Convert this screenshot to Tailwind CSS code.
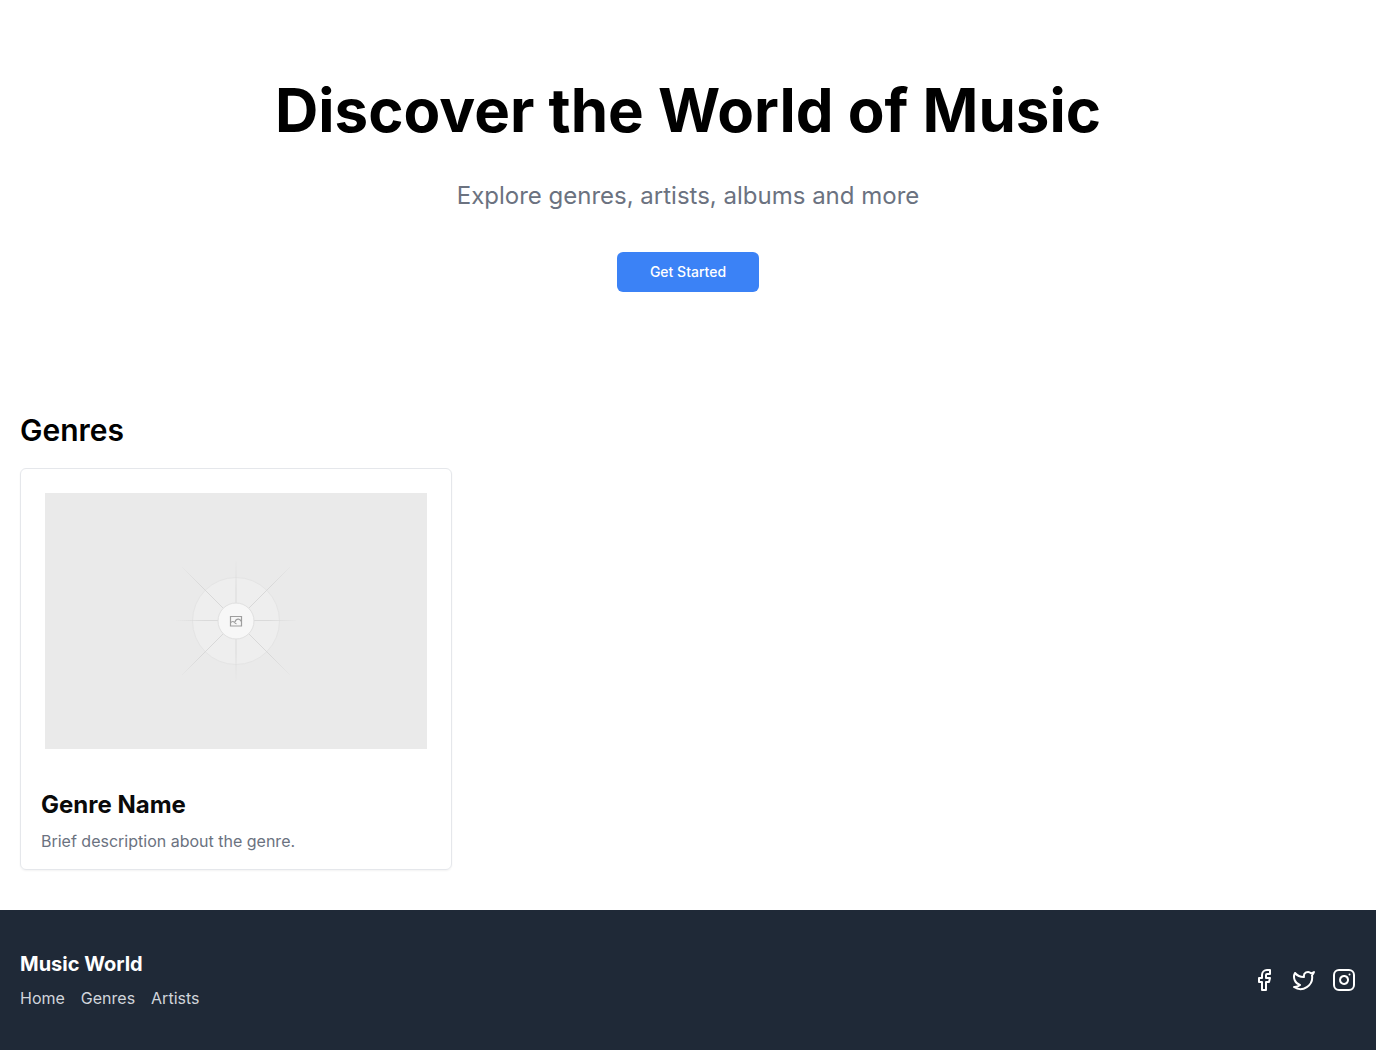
<!DOCTYPE html>
<html lang="en">
<head>
<meta charset="utf-8">
<title>Music World</title>
<script src="https://cdn.jsdelivr.net/npm/@tailwindcss/browser@4"></script>
</head>
<body class="flex min-h-screen flex-col bg-white font-['Inter',sans-serif] text-[#0a0a0a]">
<main class="grow">
<section class="flex flex-col items-center px-5 py-20 text-center text-black">
<h1 class="text-6xl font-bold">Discover the World of Music</h1>
<p class="mt-10 text-2xl text-[#6b7280]">Explore genres, artists, albums and more</p>
<button type="button" class="mt-10 h-10 rounded-md bg-[#3b82f6] px-[33px] text-sm font-medium text-white">Get Started</button>
</section>
<section class="px-5 py-10">
<h2 class="mb-5 text-3xl font-semibold text-black">Genres</h2>
<div class="grid grid-cols-3 gap-5">
<article class="rounded-md border border-[#e5e7eb] shadow-xs">
<div class="p-6">
<svg class="h-64 w-full bg-[#eaeaea]" viewBox="0 0 382 256" fill="none" role="img" aria-label="Genre image placeholder">
<defs>
<radialGradient id="fade" gradientUnits="userSpaceOnUse" cx="191" cy="128" r="64"><stop offset="0.5" stop-color="#dadada"/><stop offset="1" stop-color="#dadada" stop-opacity="0"/></radialGradient>
<radialGradient id="fade-diagonal" gradientUnits="userSpaceOnUse" cx="191" cy="128" r="82"><stop offset="0.6" stop-color="#d8d8d8"/><stop offset="1" stop-color="#d8d8d8" stop-opacity="0"/></radialGradient>
</defs>
<circle cx="191" cy="128" r="43.5" fill="#eeeeee" stroke="#e4e4e4"/>
<path d="M131 127.500H251M191 68V188" stroke="url(#fade)"/>
<path d="M137 74L245 182M245 74L137 182" stroke="url(#fade-diagonal)"/>
<circle cx="191" cy="128" r="18" fill="#f7f7f7" stroke="#e0e0e0"/>
<path d="M185.500 123.500h11v9.500h-11zM185.500 129.800c1.500-1.700 3-1.700 4-.3.600.8 1.200 1.200 2 1.100M190 129c.8-2.400 2.300-3 3.600-2.800 1.500.3 2.200 1.500 2.900 2.500" stroke="#9e9e9e" stroke-width="1.200"/>
</svg>
</div>
<div class="px-5 py-4">
<h3 class="text-2xl font-bold">Genre Name</h3>
<p class="mt-2 text-[#6b7280]">Brief description about the genre.</p>
</div>
</article>
</div>
</section>
</main>
<footer class="flex items-center justify-between bg-[#1f2937] px-5 py-10 text-white">
<div>
<h2 class="text-xl font-bold">Music World</h2>
<nav class="mt-2 flex gap-4 text-[#d1d5db]"><a href="#">Home</a><a href="#">Genres</a><a href="#">Artists</a></nav>
</div>
<div class="flex gap-4">
<a href="#" aria-label="Facebook"><svg class="size-6" viewBox="0 0 24 24" fill="none" stroke="currentColor" stroke-width="2" stroke-linecap="round" stroke-linejoin="round"><path d="M18 2h-3a5 5 0 0 0-5 5v3H7v4h3v8h4v-8h3l1-4h-4V7a1 1 0 0 1 1-1h3z"/></svg></a>
<a href="#" aria-label="Twitter"><svg class="size-6" viewBox="0 0 24 24" fill="none" stroke="currentColor" stroke-width="2" stroke-linecap="round" stroke-linejoin="round"><path d="M22 4s-.7 2.100-2 3.400c1.600 10-9.400 17.300-18 11.600 2.200.1 4.400-.6 6-2C3 15.500.5 9.600 3 5c2.200 2.600 5.600 4.100 9 4-.9-4.200 4-6.600 7-3.800 1.100 0 3-1.200 3-1.200z"/></svg></a>
<a href="#" aria-label="Instagram"><svg class="size-6" viewBox="0 0 24 24" fill="none" stroke="currentColor" stroke-width="2" stroke-linecap="round" stroke-linejoin="round"><rect width="20" height="20" x="2" y="2" rx="5"/><path d="M16 11.370A4 4 0 1 1 12.630 8 4 4 0 0 1 16 11.370z"/><path d="M17.500 6.500h.01"/></svg></a>
</div>
</footer>
</body>
</html>
